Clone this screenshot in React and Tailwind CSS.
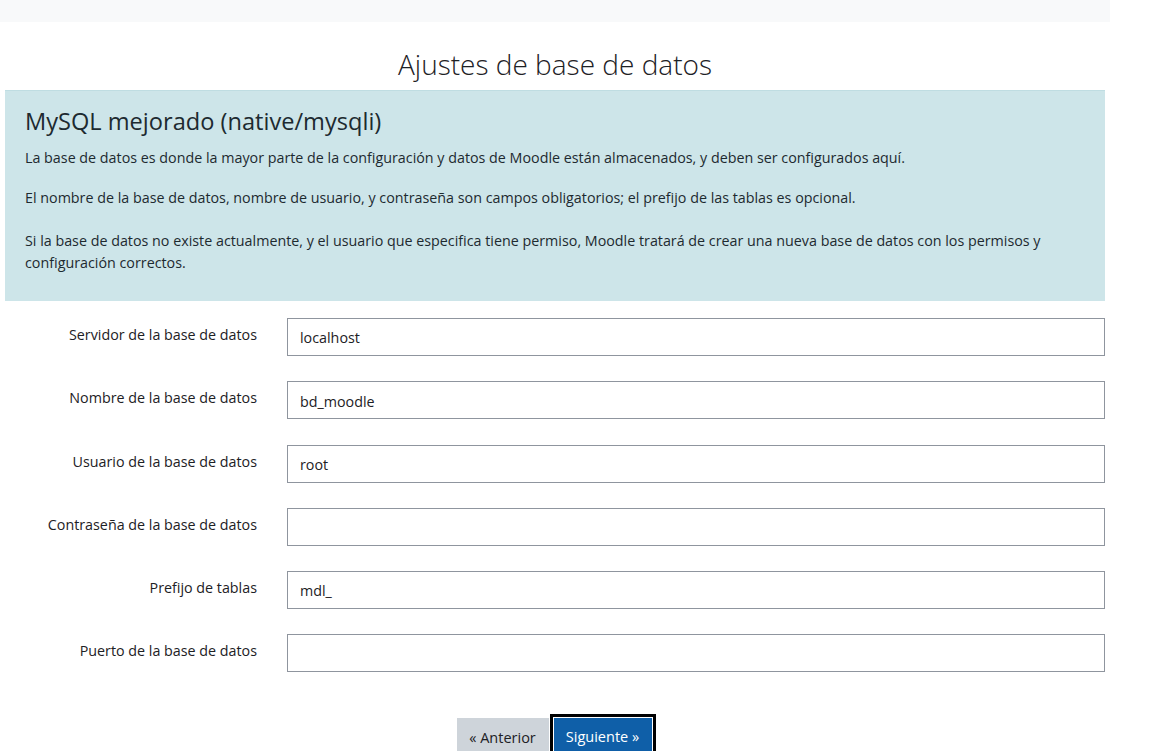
import React from "react"

const fields = [
  { label: "Servidor de la base de datos", value: "localhost" },
  { label: "Nombre de la base de datos", value: "bd_moodle" },
  { label: "Usuario de la base de datos", value: "root" },
  { label: "Contraseña de la base de datos", value: "" },
  { label: "Prefijo de tablas", value: "mdl_" },
  { label: "Puerto de la base de datos", value: "" },
]

export default function App() {
  return (
    <div
      className="min-h-[751px] bg-white text-[#1d2125]"
      style={{ fontFamily: '"Open Sans", "Noto Sans", sans-serif' }}
    >
      {/* cut-off page header */}
      <div className="h-[22px] w-[1110px] overflow-hidden bg-[#f8f9fa]">
        <div className="-mt-[24px] pl-[16px] text-[24px] leading-[28px]">
          Base de datos
        </div>
      </div>

      <div className="w-[1110px]">
        <h2 className="mt-[22px] text-center text-[28px] font-light leading-[40px]">
          Ajustes de base de datos
        </h2>

        {/* info box */}
        <div className="ml-[5px] mt-[6px] h-[211px] w-[1100px] border-t border-[#bfdde2] bg-[#cde5e9] px-[20px] pt-[14px] text-[14.3px] text-[#1d2a30]">
          <h3 className="text-[23.6px] font-normal leading-[32px]">
            MySQL mejorado (native/mysqli)
          </h3>
          <p className="mt-[10px] leading-[22px]">
            La base de datos es donde la mayor parte de la configuración y datos de Moodle están almacenados, y deben ser configurados aquí.
          </p>
          <p className="mt-[18px] leading-[22px]">
            El nombre de la base de datos, nombre de usuario, y contraseña son campos obligatorios; el prefijo de las tablas es opcional.
          </p>
          <p className="mt-[21px] leading-[22px]">
            Si la base de datos no existe actualmente, y el usuario que especifica tiene permiso, Moodle tratará de crear una nueva base de datos con los permisos y configuración correctos.
          </p>
        </div>

        {/* form */}
        <div className="mt-[17px] flex flex-col gap-[25.25px]">
          {fields.map((f) => (
            <div key={f.label} className="flex">
              <label className="w-[287px] shrink-0 pr-[30px] pt-[6px] text-right text-[14.3px] leading-[22px]">
                {f.label}
              </label>
              <div className="flex h-[38px] w-[818px] items-center border border-[#8f959e] bg-white px-[12px] pt-[2px] text-[14.3px]">
                {f.value}
              </div>
            </div>
          ))}
        </div>

        {/* buttons */}
        <div className="mt-[42px] flex items-start justify-center pl-[2px]">
          <button className="mt-[4px] h-[38px] w-[92px] bg-[#ced4da] pt-[2px] text-[14.5px] text-[#1d2125]">
            « Anterior
          </button>
          <button className="ml-[1px] h-[42px] w-[106px] border-[3px] border-black bg-[#0f5fa8] p-0">
            <span className="flex h-full w-full items-center justify-center border border-white pt-[3px] text-[14.5px] text-white">
              Siguiente »
            </span>
          </button>
        </div>
      </div>
    </div>
  )
}
